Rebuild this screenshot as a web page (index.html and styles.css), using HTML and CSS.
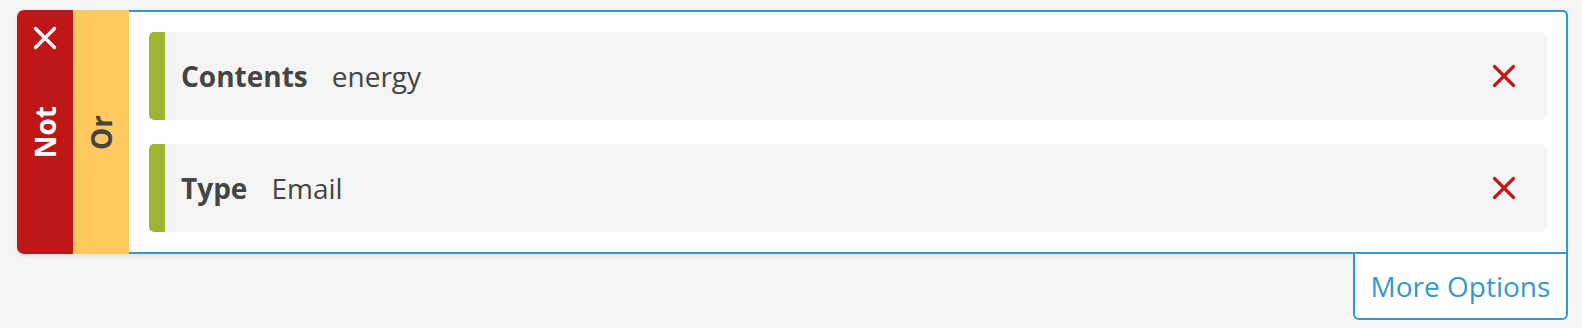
FILE: index.html
```html
<!DOCTYPE html>
<html>
<head>
<meta charset="utf-8">
<link rel="stylesheet" href="styles.css">
</head>
<body>
<div class="page">
  <div class="group">
    <div class="col col-not">
      <svg class="col-x" width="24" height="24" viewBox="0 0 24 24"><path d="M2.5 2.5 L21.5 21.5 M21.5 2.5 L2.5 21.5" stroke="#fff" stroke-width="3.4" stroke-linecap="round" fill="none"/></svg>
      <span class="vlabel">Not</span>
    </div>
    <div class="col col-or">
      <span class="vlabel vlabel-dark">Or</span>
    </div>
    <div class="box">
      <div class="row">
        <span class="key">Contents</span>
        <span class="val">energy</span>
        <svg class="row-x" width="24" height="24" viewBox="0 0 24 24"><path d="M2.5 2.5 L21.5 21.5 M21.5 2.5 L2.5 21.5" stroke="#c0171a" stroke-width="3.2" stroke-linecap="round" fill="none"/></svg>
      </div>
      <div class="row">
        <span class="key">Type</span>
        <span class="val">Email</span>
        <svg class="row-x" width="24" height="24" viewBox="0 0 24 24"><path d="M2.5 2.5 L21.5 21.5 M21.5 2.5 L2.5 21.5" stroke="#c0171a" stroke-width="3.2" stroke-linecap="round" fill="none"/></svg>
      </div>
    </div>
  </div>
  <div class="more-wrap">
    <div class="more">More Options</div>
  </div>
</div>
</body>
</html>
```

FILE: styles.css
```css
html, body {
  margin: 0;
  padding: 0;
  background: #f4f4f4;
}
body {
  font-family: "Open Sans", "Liberation Sans", sans-serif;
  color: #444;
}
.page {
  padding: 10px 14px 0 17px;
}
.group {
  display: flex;
  height: 244px;
  border-radius: 7px 4px 4px 7px;
  box-shadow: 0 2px 5px rgba(0, 0, 0, 0.08);
}
.col {
  width: 56px;
  flex: none;
  display: grid;
  justify-items: center;
}
.col > * {
  grid-area: 1 / 1;
}
.col-not {
  background: #bf1717;
  border-radius: 7px 0 0 7px;
}
.col-or {
  background: #fec95f;
}
.col-x {
  align-self: start;
  margin-top: 16px;
}
.vlabel {
  align-self: center;
  writing-mode: vertical-rl;
  transform: rotate(180deg);
  font-size: 28px;
  font-weight: 700;
  line-height: 1;
  color: #fff;
}
.vlabel-dark {
  color: #444;
}
.box {
  flex: 1;
  background: #fff;
  border: 2px solid #3399cc;
  border-left: none;
  border-radius: 0 5px 0 0;
  padding: 20px 19px 20px 20px;
  display: flex;
  flex-direction: column;
  gap: 24px;
}
.row {
  height: 88px;
  box-sizing: border-box;
  background: #f4f4f4;
  border-left: 16px solid #9db530;
  border-radius: 5px;
  display: flex;
  align-items: center;
  padding: 0 31px 0 16px;
  font-size: 28px;
}
.key {
  font-weight: 700;
  margin-right: 24px;
}
.val {
  flex: 1;
}
.row-x {
  flex: none;
}
.more-wrap {
  display: flex;
  justify-content: flex-end;
}
.more {
  background: #fff;
  border: 2px solid #3399cc;
  border-top: none;
  border-radius: 0 0 6px 6px;
  width: 215px;
  box-sizing: border-box;
  height: 66px;
  display: flex;
  align-items: center;
  justify-content: center;
  font-size: 28px;
  color: #3399cc;
}
```
